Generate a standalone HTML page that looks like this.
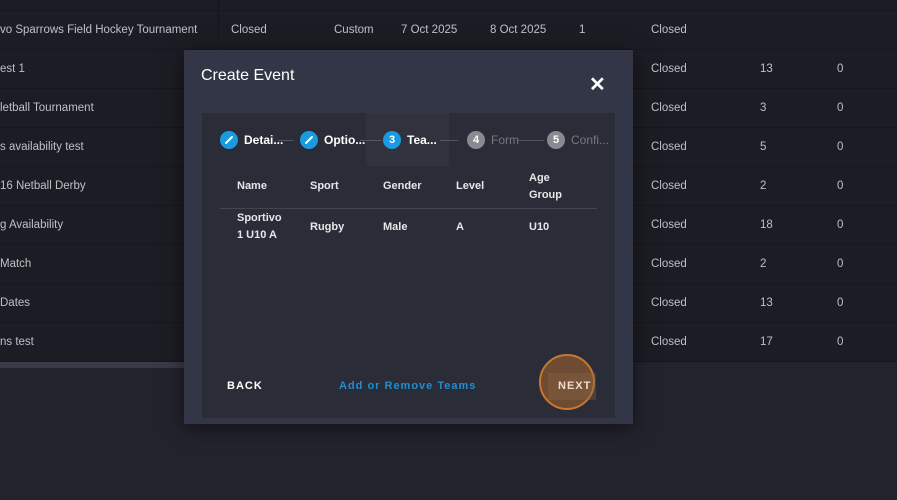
<!DOCTYPE html>
<html><head><meta charset="utf-8"><style>
*{margin:0;padding:0;box-sizing:border-box}
body{width:897px;height:500px;overflow:hidden;background:#22232c;font-family:"Liberation Sans",sans-serif;position:relative;color:#c9cad0}
.row{position:absolute;left:0;width:897px;height:39px;background:#1c1d24;border-bottom:1px solid #16171d;font-size:11.5px;color:#bfc0c6}
.row span{position:absolute;top:13px;white-space:nowrap}
.modal{position:absolute;left:184px;top:50px;width:449px;height:374px;background:#323646;box-shadow:0 4px 20px rgba(0,0,0,.5)}
.title{position:absolute;left:17px;top:17px;font-size:16px;color:#fff}
.x{position:absolute;left:405px;top:22px;font-size:20px;color:#fff;font-weight:bold}
.panel{position:absolute;left:18px;top:63px;width:413px;height:305px;background:#2a2c37}
.hl{position:absolute;left:164px;top:0;width:83px;height:53px;background:#30323e}
.step{position:absolute;top:18px;display:flex;align-items:center;font-size:12px;font-weight:bold;color:#fff}
.c{width:18px;height:18px;border-radius:50%;background:#1a9ae0;color:#fff;font-size:11px;display:flex;align-items:center;justify-content:center;margin-right:6px}
.g{background:#8a8b91}
.line{position:absolute;top:27px;height:1px;background:#55575f}
.th{position:absolute;font-size:11px;font-weight:bold;color:#e6e7ea;line-height:17px}
</style></head><body>
<div style="position:absolute;left:0;top:0;width:897px;height:11px;background:#1c1d24;border-bottom:1px solid #16171d"></div>
<div style="position:absolute;left:218px;top:0;width:1px;height:50px;background:#15161b;z-index:2"></div>
<div class="row" style="top:11px"><span style="left:0">vo Sparrows Field Hockey Tournament</span><span style="left:231px">Closed</span><span style="left:334px">Custom</span><span style="left:401px">7 Oct 2025</span><span style="left:490px">8 Oct 2025</span><span style="left:579px">1</span><span style="left:651px">Closed</span></div>
<div class="row" style="top:50px"><span style="left:0">est 1</span><span style="left:651px">Closed</span><span style="left:760px">13</span><span style="left:837px">0</span></div>
<div class="row" style="top:89px"><span style="left:0">letball Tournament</span><span style="left:651px">Closed</span><span style="left:760px">3</span><span style="left:837px">0</span></div>
<div class="row" style="top:128px"><span style="left:0">s availability test</span><span style="left:651px">Closed</span><span style="left:760px">5</span><span style="left:837px">0</span></div>
<div class="row" style="top:167px"><span style="left:0">16 Netball Derby</span><span style="left:651px">Closed</span><span style="left:760px">2</span><span style="left:837px">0</span></div>
<div class="row" style="top:206px"><span style="left:0">g Availability</span><span style="left:651px">Closed</span><span style="left:760px">18</span><span style="left:837px">0</span></div>
<div class="row" style="top:245px"><span style="left:0">Match</span><span style="left:651px">Closed</span><span style="left:760px">2</span><span style="left:837px">0</span></div>
<div class="row" style="top:284px"><span style="left:0">Dates</span><span style="left:651px">Closed</span><span style="left:760px">13</span><span style="left:837px">0</span></div>
<div class="row" style="top:323px"><span style="left:0">ns test</span><span style="left:651px">Closed</span><span style="left:760px">17</span><span style="left:837px">0</span></div>
<div style="position:absolute;left:0;top:362px;width:184px;height:6px;background:#383a47"></div>
<div class="modal">
<div class="title">Create Event</div>
<div class="x">✕</div>
<div class="panel">
<div class="hl"></div>
<div class="line" style="left:76px;width:16px"></div>
<div class="line" style="left:158px;width:22px"></div>
<div class="line" style="left:238px;width:18px"></div>
<div class="line" style="left:316px;width:26px"></div>
<div class="step" style="left:18px"><div class="c"><svg width="10" height="10" viewBox="0 0 10 10"><path d="M2 8L8 2" stroke="#fff" stroke-width="2" stroke-linecap="round"/></svg></div>Detai...</div>
<div class="step" style="left:98px"><div class="c"><svg width="10" height="10" viewBox="0 0 10 10"><path d="M2 8L8 2" stroke="#fff" stroke-width="2" stroke-linecap="round"/></svg></div>Optio...</div>
<div class="step" style="left:181px"><div class="c">3</div>Tea...</div>
<div class="step" style="left:265px;color:#77787e;font-weight:normal"><div class="c g" style="font-weight:bold">4</div>Form</div>
<div class="step" style="left:345px;color:#77787e;font-weight:normal"><div class="c g" style="font-weight:bold">5</div>Confi...</div>
<div class="th" style="left:35px;top:65px">Name</div>
<div class="th" style="left:108px;top:65px">Sport</div>
<div class="th" style="left:181px;top:65px">Gender</div>
<div class="th" style="left:254px;top:65px">Level</div>
<div class="th" style="left:327px;top:57px">Age<br>Group</div>
<div style="position:absolute;left:18px;top:95px;width:377px;height:1px;background:#44464f"></div>
<div class="th" style="left:35px;top:97px">Sportivo<br>1 U10 A</div>
<div class="th" style="left:108px;top:106px">Rugby</div>
<div class="th" style="left:181px;top:106px">Male</div>
<div class="th" style="left:254px;top:106px">A</div>
<div class="th" style="left:327px;top:106px">U10</div>
<div class="th" style="left:25px;top:265px;letter-spacing:1px;color:#fff">BACK</div>
<div class="th" style="left:137px;top:265px;letter-spacing:1px;color:#1f8fcf">Add or Remove Teams</div>
<div style="position:absolute;left:337px;top:241px;width:56px;height:56px;border-radius:50%;background:#6e4c33;border:2px solid #c9772f"></div>
<div style="position:absolute;left:346px;top:260px;width:48px;height:27px;background:rgba(140,100,70,.35)"></div>
<div class="th" style="left:356px;top:265px;letter-spacing:1px;color:#f0dccb">NEXT</div>
</div></div>
</body></html>
